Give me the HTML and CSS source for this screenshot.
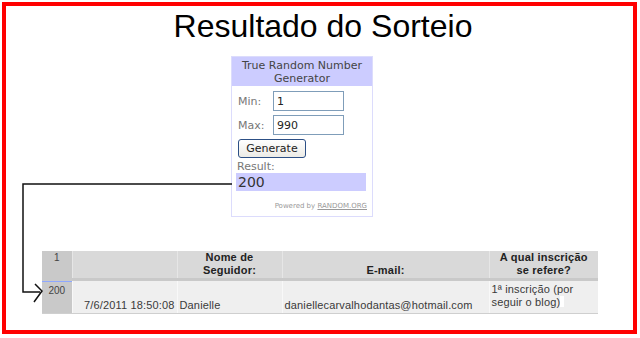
FILE: index.html
```html
<!DOCTYPE html>
<html lang="pt">
<head>
    <meta charset="UTF-8">
    <title>Resultado do Sorteio</title>
    <link rel="stylesheet" href="styles.css">
</head>
<body>

<div class="frame">
    <h1 class="title">Resultado do Sorteio</h1>

    <div class="widget">
        <div class="widget-head">True Random Number<br>Generator</div>
        <div class="widget-body">
            <div class="field">
                <span class="label">Min:</span>
                <input class="num" type="text" value="1">
            </div>
            <div class="field">
                <span class="label">Max:</span>
                <input class="num" type="text" value="990">
            </div>
            <button class="generate">Generate</button>
            <div class="result-label">Result:</div>
            <div class="result">200</div>
            <div class="powered">Powered by <u>RANDOM.ORG</u></div>
        </div>
    </div>

    <table class="sheet">
        <colgroup>
            <col class="c0">
            <col class="c1">
            <col class="c2">
            <col class="c3">
            <col class="c4">
        </colgroup>
        <thead>
            <tr>
                <th class="rownum">1</th>
                <th></th>
                <th>Nome de<br>Seguidor:</th>
                <th>E-mail:</th>
                <th>A qual inscrição<br>se refere?</th>
            </tr>
        </thead>
        <tbody>
            <tr>
                <td class="rownum">200</td>
                <td class="right">7/6/2011 18:50:08</td>
                <td>Danielle</td>
                <td>daniellecarvalhodantas@hotmail.com</td>
                <td class="top">1ª inscrição (por<br>seguir o blog)<span class="blank"></span></td>
            </tr>
        </tbody>
    </table>
</div>

<!-- arrow from the result to the table row -->
<svg class="arrow" width="640" height="338" viewBox="0 0 640 338">
    <polyline points="232,184 23,184 23,292 40,292" fill="none" stroke="#111" stroke-width="1.5"/>
    <polyline points="35,284 42,291 34,302" fill="none" stroke="#111" stroke-width="1.5"/>
</svg>

</body>
</html>
```

FILE: styles.css
```css
body {
    margin: 0;
    position: relative;
    background-color: #fff;
    font-family: 'Liberation Sans', Arial, sans-serif;
}
.frame {
    width: 635px;
    height: 332px;
    margin: 2px 0 0 2px;
    box-sizing: border-box;
    border: 4px solid #ff0000;
}
.title {
    margin: 2px 0 0;
    padding-left: 7px;
    font-size: 32px;
    font-weight: normal;
    line-height: 36px;
    text-align: center;
    color: #000;
}
.widget {
    width: 142px;
    margin: 12px 0 0 225px;
    box-sizing: border-box;
    border: 1px solid #dcdcfc;
    font-family: 'DejaVu Sans', Verdana, sans-serif;
    font-size: 11px;
}
.widget-head {
    height: 29px;
    background-color: #ccccff;
    color: #444;
    text-align: center;
    line-height: 13px;
    padding-top: 2px;
    box-sizing: border-box;
}
.widget-body {
    padding: 5px 5px 6px 4px;
}
.field {
    display: flex;
    align-items: center;
    margin-bottom: 4px;
}
.label {
    width: 35px;
    padding-left: 2px;
    color: #777;
}
.num {
    width: 71px;
    height: 20px;
    box-sizing: border-box;
    border: 1px solid #7f9db9;
    padding: 0 3px;
    margin: 0;
    font-family: 'DejaVu Sans', Verdana, sans-serif;
    font-size: 11px;
    color: #222;
}
.generate {
    display: block;
    width: 68px;
    height: 19px;
    margin: 0 0 0 2px;
    padding: 0;
    border: 1px solid #2c4f85;
    border-radius: 3px;
    background: linear-gradient(#ffffff, #ecebe6);
    font-family: 'DejaVu Sans', Verdana, sans-serif;
    font-size: 11px;
    color: #222;
}
.result-label {
    margin-top: 2px;
    padding-left: 1px;
    line-height: 13px;
    color: #777;
}
.result {
    width: 130px;
    height: 18px;
    background-color: #ccccff;
    font-size: 14px;
    line-height: 18px;
    color: #333;
    padding-left: 2px;
    box-sizing: border-box;
}
.powered {
    margin-top: 11px;
    text-align: right;
    font-size: 7px;
    color: #999;
}
.sheet {
    margin: 34px 0 0 36px;
    width: 556px;
    table-layout: fixed;
    border-collapse: collapse;
    font-size: 11px;
    color: #3a3a3a;
}
.c0 { width: 30px; }
.c1 { width: 105px; }
.c2 { width: 105px; }
.c3 { width: 207px; }
.c4 { width: 109px; }
.sheet th {
    height: 25px;
    padding: 0 2px 1px;
    background-color: #d9d9d9;
    border-left: 1px solid #e6e6e6;
    border-bottom: 3px solid #c9c9c9;
    font-weight: bold;
    line-height: 13px;
    letter-spacing: 0.2px;
    color: #222;
    vertical-align: bottom;
    text-align: center;
}
.sheet td {
    height: 28px;
    padding: 0 2px 1px;
    background-color: #efefef;
    border-left: 1px solid #f8f8f8;
    border-bottom: 1px solid #cfcfcf;
    line-height: 13px;
    letter-spacing: 0.15px;
    vertical-align: bottom;
    white-space: nowrap;
}
.sheet .rownum {
    background-color: #c9c9c9;
    border-left: none;
    font-weight: normal;
    font-size: 10px;
    color: #444;
    vertical-align: top;
    text-align: center;
    letter-spacing: 0;
}
.sheet td.rownum {
    box-shadow: inset 0 1px 0 #8fa8ff;
    padding-top: 3px;
}
.sheet .right {
    text-align: right;
}
.sheet .top {
    vertical-align: top;
    padding-top: 2px;
}
.blank {
    display: inline-block;
    width: 4px;
    height: 11px;
    background-color: #fff;
    vertical-align: -1px;
}
.arrow {
    position: absolute;
    left: 0;
    top: 0;
    pointer-events: none;
}
```
